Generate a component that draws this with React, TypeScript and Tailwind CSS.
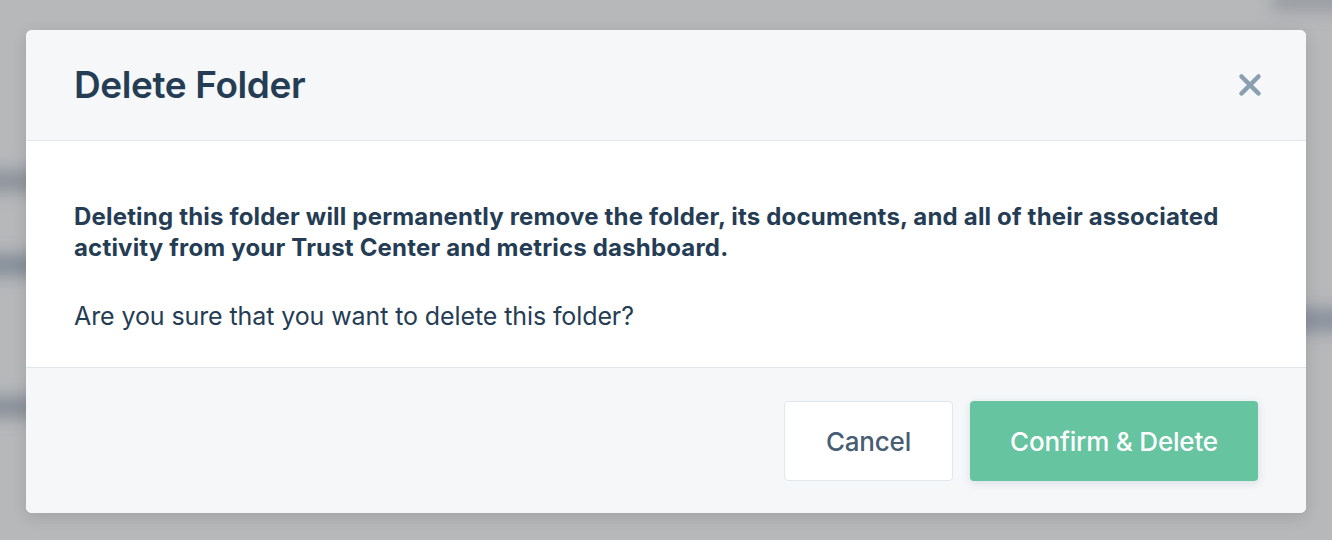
import { X } from "lucide-react";

const FONT = { fontFamily: "Inter, 'Liberation Sans', sans-serif" };

// Blurred page behind the modal backdrop.
function BackdropPage() {
  return (
    <div className="absolute inset-0 overflow-hidden bg-[#b7b8ba]">
      <div className="absolute left-[-40px] top-[170px] h-[22px] w-[120px] rounded bg-[#8d939b] blur-[8px]" />
      <div className="absolute left-[-40px] top-[254px] h-[22px] w-[120px] rounded bg-[#858d98] blur-[8px]" />
      <div className="absolute left-[-40px] top-[396px] h-[22px] w-[120px] rounded bg-[#8a9099] blur-[8px]" />
      <div className="absolute right-[-40px] top-[308px] h-[24px] w-[100px] rounded bg-[#8a909c] blur-[8px]" />
      <div className="absolute right-[-30px] top-[-10px] h-[22px] w-[90px] rounded bg-[#9a9ea3] blur-[8px]" />
    </div>
  );
}

export default function App() {
  return (
    <div className="relative h-[540px] w-[1332px] overflow-hidden" style={FONT}>
      <BackdropPage />
      <div className="relative flex h-full items-start justify-center pt-[30px]">
        <div className="w-[1280px] overflow-hidden rounded-[6px] bg-white shadow-[0_4px_16px_rgba(0,0,0,0.12)]">
          <div className="flex h-[111px] items-center justify-between border-b border-[#e0e7ee] bg-[#f5f7f9] pl-12 pr-[39px]">
            <h2 className="text-[37px] font-semibold tracking-[-0.4px] text-[#253d54]">Delete Folder</h2>
            <button type="button" className="text-[#8a9fb1]">
              <X size={34} strokeWidth={3.2} />
            </button>
          </div>
          <div className="border-b border-[#e0e7ee] px-12 pb-[35px] pt-[60px] text-[25px] leading-[31px] text-[#253d54]">
            <p className="text-[24px] font-bold tracking-[0.18px]">
              Deleting this folder will permanently remove the folder, its documents, and all of their associated
              activity from your Trust Center and metrics dashboard.
            </p>
            <p className="mt-[38px] tracking-[-0.1px]">Are you sure that you want to delete this folder?</p>
          </div>
          <div className="flex justify-end gap-[17px] bg-[#f5f7f9] px-12 pb-[32px] pt-[33px]">
            <button
              type="button"
              className="h-[80px] w-[169px] rounded-[4px] border border-[#e1e7ee] bg-white text-[26px] font-medium tracking-[-0.2px] text-[#475d74]"
            >
              Cancel
            </button>
            <button
              type="button"
              className="h-[80px] w-[288px] rounded-[4px] bg-[#66c4a1] text-[26px] font-medium tracking-[-0.2px] text-white shadow-[0_2px_8px_rgba(60,80,100,0.15)]"
            >
              Confirm &amp; Delete
            </button>
          </div>
        </div>
      </div>
    </div>
  );
}
